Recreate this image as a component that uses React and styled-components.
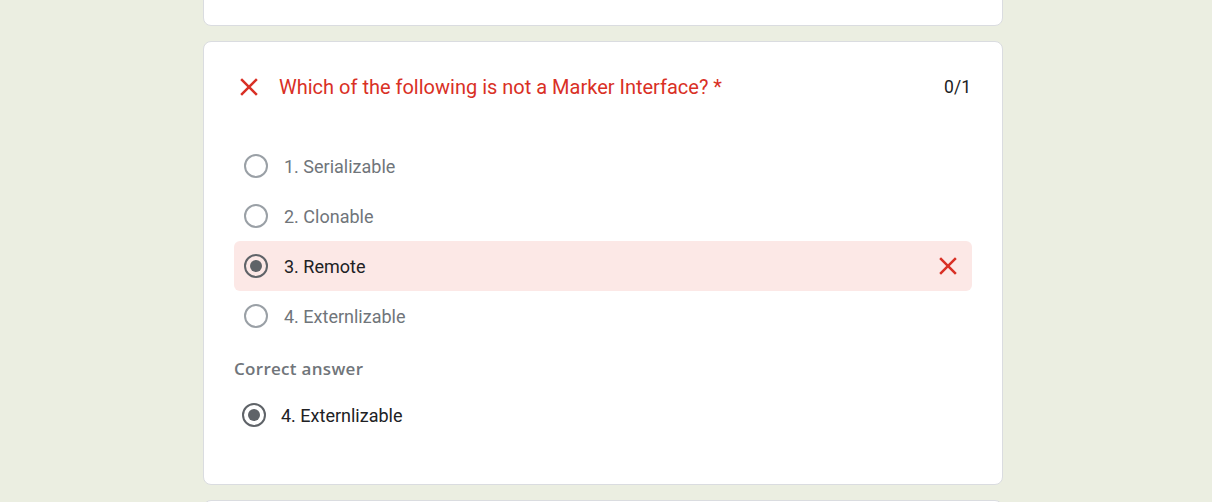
import React from "react";
import styled, { createGlobalStyle } from "styled-components";

const GlobalStyle = createGlobalStyle`
  html, body {
    margin: 0;
    padding: 0;
    background: #ebeee1;
    overflow: hidden;
  }
  body {
    font-family: Roboto, "Liberation Sans", Arial, sans-serif;
  }
`;

const Page = styled.main`
  width: 800px;
  margin: 0 auto;
  padding-right: 6px;
  display: flex;
  flex-direction: column;
  gap: 15px;
`;

const Card = styled.section`
  box-sizing: border-box;
  background: #fff;
  border: 1px solid #dadce0;
  border-radius: 8px;
  margin-top: ${(p) => p.$offset || 0}px;
  height: ${(p) => (p.$height ? `${p.$height}px` : "auto")};
  padding: ${(p) => (p.$empty ? 0 : "30px 30px 44px")};
`;

const Header = styled.header`
  display: flex;
  align-items: center;
  height: 30px;
  margin-bottom: 39px;
`;

const Title = styled.h2`
  flex: 1;
  margin: 0 0 0 15px;
  font-size: 20px;
  font-weight: 400;
  color: #d93025;
`;

const Score = styled.span`
  font-size: 17.5px;
  color: #202124;
  margin-right: 1px;
`;

const Options = styled.div`
  display: flex;
  flex-direction: column;
`;

const Option = styled.div`
  display: flex;
  align-items: center;
  height: 50px;
  padding: ${(p) => (p.$compact ? "0 0 0 8px" : "0 9px 0 10px")};
  gap: ${(p) => (p.$compact ? 15 : 16)}px;
  border-radius: 6px;
  background: ${(p) => (p.$wrong ? "#fce8e6" : "transparent")};
`;

const Radio = styled.span`
  box-sizing: border-box;
  width: 24px;
  height: 24px;
  border-radius: 50%;
  border: 2px solid ${(p) => (p.$checked ? "#5f6368" : "#9aa0a6")};
  display: flex;
  align-items: center;
  justify-content: center;
  flex-shrink: 0;

  &::after {
    content: "";
    display: ${(p) => (p.$checked ? "block" : "none")};
    width: 12px;
    height: 12px;
    border-radius: 50%;
    background: #5f6368;
  }
`;

const Label = styled.span`
  flex: 1;
  font-size: 18px;
  color: ${(p) => (p.$active ? "#202124" : "#70757a")};
`;

const SectionLabel = styled.div`
  margin: 16px 0 10px;
  font-family: "Open Sans", Roboto, sans-serif;
  font-size: 17px;
  font-weight: 600;
  letter-spacing: 0.3px;
  color: #70757a;
`;

const CloseIcon = ({ size = 30 }) => (
  <svg width={size} height={size} viewBox="0 0 24 24" fill="#d93025">
    <path d="M19 6.41L17.59 5 12 10.59 6.41 5 5 6.41 10.59 12 5 17.59 6.41 19 12 13.41 17.59 19 19 17.59 13.41 12z" />
  </svg>
);

const options = [
  "1. Serializable",
  "2. Clonable",
  "3. Remote",
  "4. Externlizable",
];
const chosen = 2;

export default function App() {
  return (
    <>
      <GlobalStyle />
      <Page>
        <Card $empty $height={60} $offset={-34} />
        <Card>
          <Header>
            <CloseIcon />
            <Title>Which of the following is not a Marker Interface? *</Title>
            <Score>0/1</Score>
          </Header>
          <Options>
            {options.map((text, i) => (
              <Option key={text} $wrong={i === chosen}>
                <Radio $checked={i === chosen} />
                <Label $active={i === chosen}>{text}</Label>
                {i === chosen && <CloseIcon />}
              </Option>
            ))}
          </Options>
          <SectionLabel>Correct answer</SectionLabel>
          <Option $compact>
            <Radio $checked />
            <Label $active>4. Externlizable</Label>
          </Option>
        </Card>
        <Card $empty $height={60} />
      </Page>
    </>
  );
}
